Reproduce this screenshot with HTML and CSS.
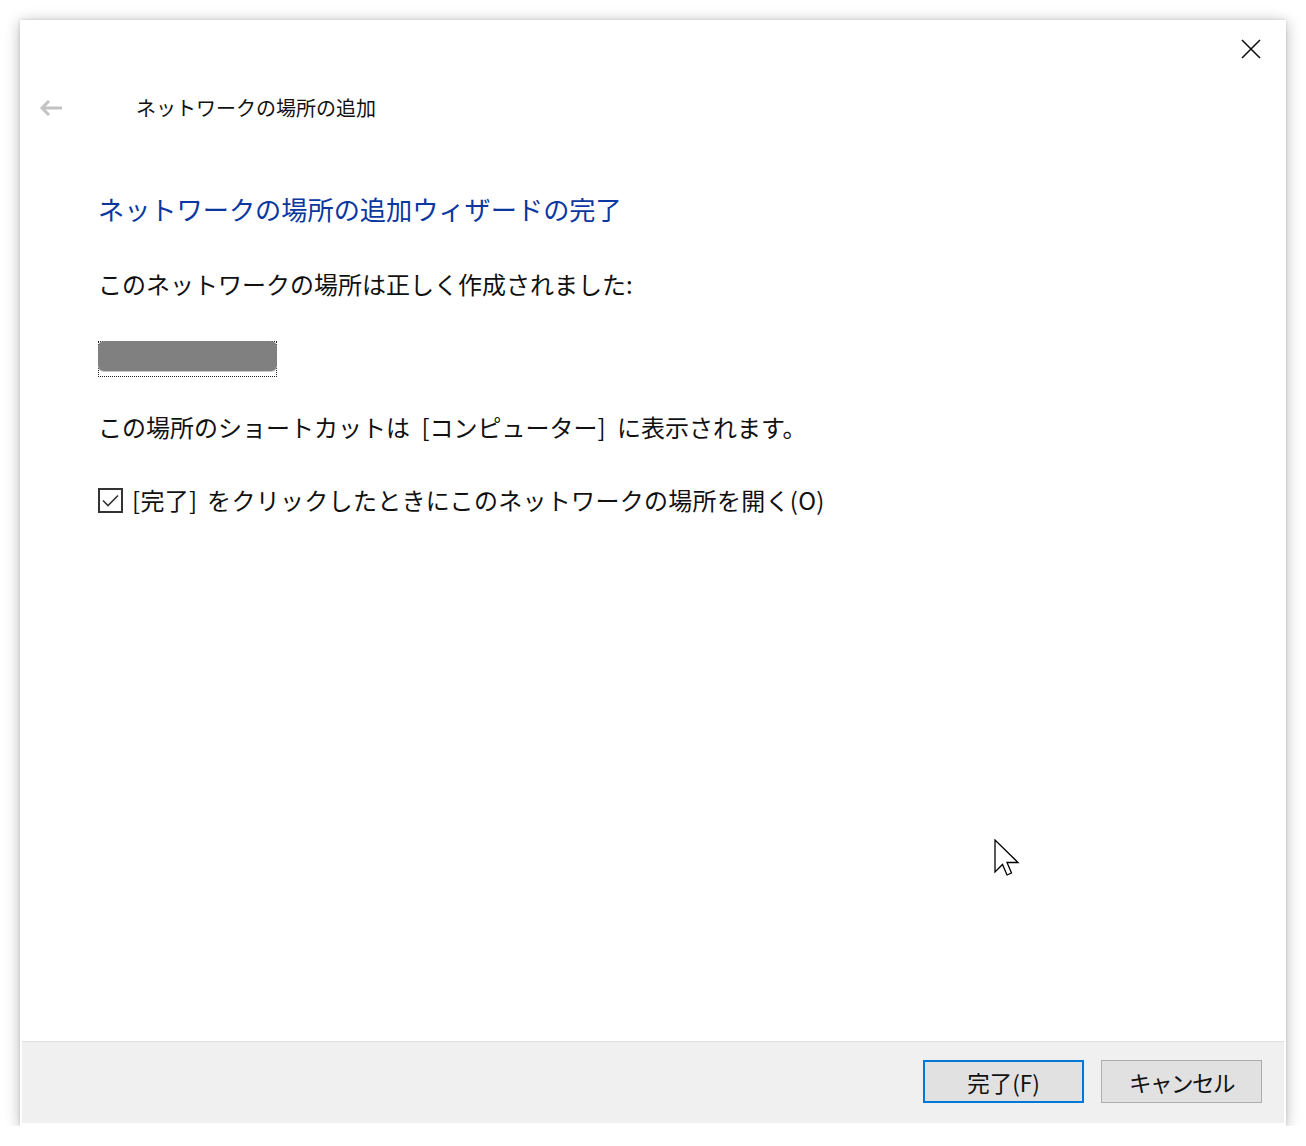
FILE: index.html
```html
<!DOCTYPE html>
<html lang="ja">
<head>
<meta charset="utf-8">
<link rel="stylesheet" href="styles.css">
</head>
<body>
<div class="window">
  <div class="topbar">
    <svg class="close" width="20" height="20" viewBox="0 0 20 20"><path d="M1 1 L19 19 M19 1 L1 19" stroke="#111" stroke-width="1.6" fill="none"/></svg>
  </div>
  <div class="navrow">
    <svg class="back" width="24" height="16" viewBox="0 0 24 16"><path d="M23 8 H3 M10 1 L3 8 L10 15" stroke="#c3c3c3" stroke-width="3" fill="none"/></svg>
    <span class="navtitle">ネットワークの場所の追加</span>
  </div>
  <div class="content">
    <h1 class="heading">ネットワークの場所の追加ウィザードの完了</h1>
    <p class="text t1">このネットワークの場所は正しく作成されました:</p>
    <div class="redact"><div class="blot"></div></div>
    <p class="text t2">この場所のショートカットは [コンピューター] に表示されます。</p>
    <label class="check">
      <span class="box"><svg width="17" height="13" viewBox="0 0 17 13"><path d="M1 6.5 L6 11.5 L16 1.5" stroke="#333" stroke-width="1.6" fill="none"/></svg></span>
      <span class="text">[完了] をクリックしたときにこのネットワークの場所を開く(O)</span>
    </label>
  </div>
  <div class="footer">
    <button class="btn primary">完了(F)</button>
    <button class="btn cancel">キャンセル</button>
  </div>
  <svg class="cursor" width="26" height="38" viewBox="0 0 26 38"><path d="M1 1 V33 L8.5 25.5 L13 36 L17.5 34 L13 23.5 H24 Z" fill="#fff" stroke="#000" stroke-width="1.3" stroke-linejoin="miter"/></svg>
</div>
</body>
</html>
```
FILE: styles.css
```css
* { box-sizing: border-box; }
html, body { margin: 0; padding: 0; background: #ffffff; }
body {
  font-family: "Noto Sans CJK JP", "Noto Sans", sans-serif;
  color: #000;
}
.window {
  position: relative;
  margin: 20px 0 0 20px;
  width: 1266px;
  height: 1106px;
  background: #fff;
  box-shadow: 0 2px 14px rgba(0,0,0,0.28), 0 0 3px rgba(0,0,0,0.12);
  display: flex;
  flex-direction: column;
  padding: 0 2px 3px 2px;
}
.topbar {
  height: 60px;
  display: flex;
  justify-content: flex-end;
  padding: 19px 23px 0 0;
}
.close { display: block; }
.navrow {
  height: 56px;
  display: flex;
  align-items: center;
  padding-left: 17px;
}
.back { display: block; }
.navtitle {
  margin-left: 73px;
  font-size: 20px;
  line-height: 1;
  color: #111;
}
.content {
  flex: 1;
  padding-left: 76px;
  padding-top: 55px;
}
.heading {
  margin: 0;
  font-weight: 400;
  font-size: 26.2px;
  line-height: 36px;
  color: #0a37a0;
}
.text {
  font-size: 24px;
  line-height: 30px;
  margin: 0;
  color: #111;
}
.t1 { margin-top: 42px; }
.redact {
  margin-top: 42px;
  width: 179px;
  height: 36px;
  border: 1px dotted #222;
  position: relative;
}
.blot {
  position: absolute;
  left: -1px; top: -1px; right: -1px; bottom: 5px;
  background: #808080;
  border-radius: 6px;
  box-shadow: 0 1px 0 #c8c8c8;
}
.t2 { margin-top: 35px; word-spacing: 6px; }
.check {
  margin-top: 43px;
  display: flex;
  align-items: center;
}
.check .text { margin-left: 9px; word-spacing: 4px; letter-spacing: 0.3px; }
.box {
  width: 25px;
  height: 25px;
  border: 2px solid #333;
  display: flex;
  align-items: center;
  justify-content: center;
}
.box svg { display: block; }
.footer {
  height: 82px;
  background: #f0f0f0;
  border-top: 1px solid #dfdfdf;
  display: flex;
  justify-content: flex-end;
  align-items: flex-start;
  gap: 17px;
  padding: 18px 22px 0 0;
}
.btn {
  width: 161px;
  height: 43px;
  background: #e1e1e1;
  border: 1px solid #adadad;
  font-family: "Noto Sans CJK JP", "Noto Sans", sans-serif;
  font-size: 22.5px;
  color: #111;
  padding: 0;
}
.btn.cancel { letter-spacing: -1.5px; }
.btn.primary { border: 2px solid #0078d7; }
.cursor {
  position: absolute;
  left: 974px;
  top: 819px;
}
```
